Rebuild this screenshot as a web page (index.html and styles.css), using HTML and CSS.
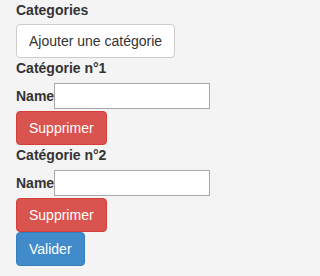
FILE: index.html
```html
<!DOCTYPE html>
<html>
<head>
<meta charset="utf-8">
<link rel="stylesheet" href="styles.css">
</head>
<body>
<form class="form">
  <label class="title">Categories</label>
  <button type="button" class="btn btn-default">Ajouter une catégorie</button>
  <div class="group">
    <label class="heading">Catégorie n°1</label>
    <div class="row"><label class="name">Name</label><input type="text" class="field"></div>
    <button type="button" class="btn btn-danger">Supprimer</button>
  </div>
  <div class="group">
    <label class="heading">Catégorie n°2</label>
    <div class="row"><label class="name">Name</label><input type="text" class="field"></div>
    <button type="button" class="btn btn-danger">Supprimer</button>
  </div>
  <button type="submit" class="btn btn-primary">Valider</button>
</form>
</body>
</html>
```
FILE: styles.css
```css
html, body {
  margin: 0;
  padding: 0;
  background: #f4f4f4;
}
body {
  font-family: "Liberation Sans", Arial, sans-serif;
  font-size: 14px;
  line-height: 20px;
  color: #333;
}
.form {
  display: flex;
  flex-direction: column;
  align-items: flex-start;
  padding: 0 16px;
}
.title, .heading, .name {
  font-weight: bold;
  display: block;
  line-height: 20px;
}
.title {
  margin-bottom: 4px;
}
.group {
  display: flex;
  flex-direction: column;
  align-items: flex-start;
}
.heading {
  margin-bottom: 5px;
}
.row {
  display: flex;
  align-items: baseline;
  margin-bottom: 2px;
}
.field {
  box-sizing: border-box;
  width: 156px;
  height: 26px;
  margin: 0;
  padding: 2px 2px;
  border: 1px solid #a9a9a9;
  background: #fff;
  font: inherit;
  line-height: 20px;
}
.btn {
  box-sizing: border-box;
  display: inline-block;
  height: 34px;
  padding: 6px 12px;
  margin: 0;
  font-family: inherit;
  font-size: 14px;
  line-height: 20px;
  border: 1px solid transparent;
  border-radius: 4px;
  cursor: pointer;
}
.btn-default {
  background: #fff;
  border-color: #ccc;
  color: #333;
}
.btn-danger {
  background: #d9534f;
  border-color: #d43f3a;
  color: #fff;
}
.btn-primary {
  background: #428bca;
  border-color: #357ebd;
  color: #fff;
}
```
